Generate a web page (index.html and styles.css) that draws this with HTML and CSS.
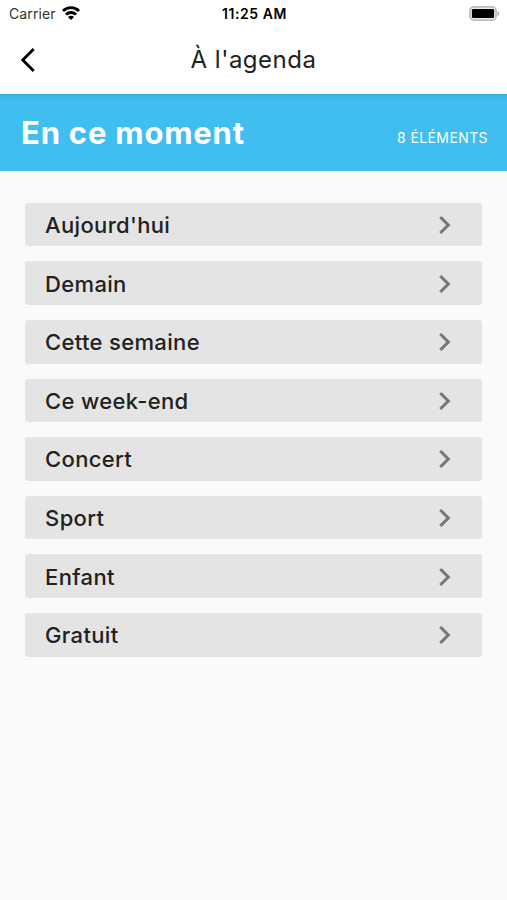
FILE: index.html
```html
<!DOCTYPE html>
<html lang="fr">
<head>
<meta charset="utf-8">
<title>À l'agenda</title>
<link rel="stylesheet" href="styles.css">
</head>
<body>
<div class="status">
  <div class="carrier"><span>Carrier</span>
    <svg class="wifi" width="18" height="14" viewBox="0 0 18 14" fill="none" stroke="#000" stroke-width="2.8"><path d="M1 5a11.4 11.4 0 0 1 16 0M3.9 8.6a7.3 7.3 0 0 1 10.2 0"/><path d="M9 14 6 11a4.2 4.2 0 0 1 6 0z" fill="#000" stroke="none"/></svg>
  </div>
  <time class="clock">11:25 AM</time>
  <svg class="battery" width="31" height="15" viewBox="0 0 31 15"><rect x=".9" y=".9" width="26.2" height="13.2" rx="4" fill="#eee" stroke="#bdbdbd" stroke-width="1.7"/><rect x="2.9" y="2.9" width="22.2" height="9.2" rx="1.4"/><path d="M28.5 5v5c2.3-1 2.3-4 0-5z" fill="#aaa"/></svg>
</div>
<header class="bar">
  <svg class="back" width="16" height="26" viewBox="0 0 16 26" fill="none" stroke="#000" stroke-width="2.9"><path d="M13.7 2 2.8 13l10.9 11"/></svg>
  <h1>À l'agenda</h1>
</header>
<section class="banner">
  <h2>En ce moment</h2>
  <span class="count">8 ÉLÉMENTS</span>
</section>
<ul class="list">
  <li><span>Aujourd'hui</span><svg class="chev" viewBox="0 0 14 20"><path d="m2.3 2 8 8-8 8"/></svg></li>
  <li><span>Demain</span><svg class="chev" viewBox="0 0 14 20"><path d="m2.3 2 8 8-8 8"/></svg></li>
  <li><span>Cette semaine</span><svg class="chev" viewBox="0 0 14 20"><path d="m2.3 2 8 8-8 8"/></svg></li>
  <li><span>Ce week-end</span><svg class="chev" viewBox="0 0 14 20"><path d="m2.3 2 8 8-8 8"/></svg></li>
  <li><span>Concert</span><svg class="chev" viewBox="0 0 14 20"><path d="m2.3 2 8 8-8 8"/></svg></li>
  <li><span>Sport</span><svg class="chev" viewBox="0 0 14 20"><path d="m2.3 2 8 8-8 8"/></svg></li>
  <li><span>Enfant</span><svg class="chev" viewBox="0 0 14 20"><path d="m2.3 2 8 8-8 8"/></svg></li>
  <li><span>Gratuit</span><svg class="chev" viewBox="0 0 14 20"><path d="m2.3 2 8 8-8 8"/></svg></li>
</ul>
</body>
</html>
```
FILE: styles.css
```css
* { box-sizing: border-box; }
body { margin: 0; min-height: 900px; background: #fafafa; color: #212121; font-family: Inter, "Liberation Sans", sans-serif; }
h1, h2, ul { margin: 0; padding: 0; }
svg { display: block; }
.status { display: grid; grid-template-columns: 1fr auto 1fr; align-items: center; height: 27px; padding: 0 7px 0 9px; background: #fff; font-size: 14px; line-height: 27px; }
.carrier { display: flex; align-items: center; gap: 6px; color: #333; letter-spacing: .1px; }
.wifi { margin-top: -2px; }
.clock { color: #000; font-weight: 600; font-size: 14px; letter-spacing: .55px; }
.battery { justify-self: end; }
.bar { display: grid; grid-template-columns: 40px 1fr 40px; align-items: center; height: 67px; padding: 0 20px 2px; background: #fff; }
h1 { grid-column: 2; text-align: center; font-size: 24px; font-weight: 400; letter-spacing: .5px; line-height: 65px; }
.banner { display: flex; align-items: center; justify-content: space-between; height: 76.6px; padding: 0 19px 0 21px; color: #fff; background: linear-gradient(#38abd8, #3dbaed 4px, #40beef 8px); }
h2 { font-size: 31px; font-weight: 700; letter-spacing: .8px; }
.count { font-size: 14px; letter-spacing: .4px; margin-top: 11px; }
.list { display: flex; flex-direction: column; gap: 15px; padding: 32px 24.6px; list-style: none; }
.list li { display: flex; align-items: center; justify-content: space-between; height: 43.65px; padding: 1px 30px 0 20.5px; background: #e4e4e4; border-radius: 3px; font-size: 22px; font-weight: 500; letter-spacing: .33px; }
.chev { width: 14px; height: 20px; fill: none; stroke: #777; stroke-width: 3.1; }
```
